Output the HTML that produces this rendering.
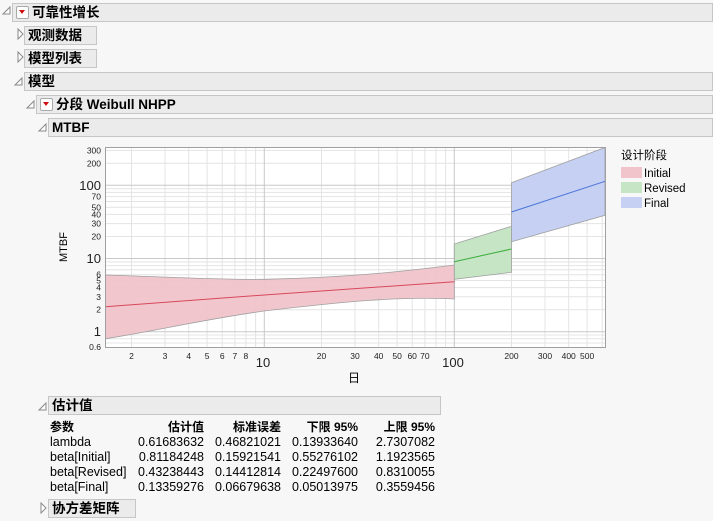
<!DOCTYPE html>
<html><head><meta charset="utf-8"><style>
body{margin:0;width:713px;height:521px;background:#f7f7f7;font-family:"Liberation Sans","Noto Sans CJK SC",sans-serif;position:relative;overflow:hidden;color:#000}
.h{position:absolute;background:#ebebeb;border:1px solid #c6c6c6;box-sizing:border-box;height:19px;font-weight:bold;font-size:13.5px;line-height:17px;padding-left:3px;white-space:nowrap}
.red{display:inline-block;width:11px;height:11px;border:1px solid #aaa;border-radius:2px;background:#fff;vertical-align:-2px;margin-right:3px;position:relative}
.red:after{content:"";position:absolute;left:2px;top:3px;border-left:3.5px solid transparent;border-right:3.5px solid transparent;border-top:4px solid #d01010}
table{position:absolute;left:50px;top:420px;border-collapse:collapse;font-size:12.5px;table-layout:fixed;width:385px}
td{padding:0;height:15px;line-height:15px;text-align:right;white-space:nowrap}
td:first-child{text-align:left}
th{text-align:right;font-weight:bold;height:15px;line-height:15px;font-size:12px;padding:0;white-space:nowrap}
th:first-child{text-align:left}
</style></head><body>
<svg style="position:absolute;left:0;top:0" width="713" height="521">
<g fill="none" stroke="#8a8a8a" stroke-width="1">
<path d="M3 14 L10 7 L10 14 Z" fill="#fff"/>
<path d="M18 29 L23 34 L18 39 Z" fill="#fff"/>
<path d="M18 52 L23 57 L18 62 Z" fill="#fff"/>
<path d="M15 85 L22 78 L22 85 Z" fill="#fff"/>
<path d="M27 108 L34 101 L34 108 Z" fill="#fff"/>
<path d="M39 131 L46 124 L46 131 Z" fill="#fff"/>
<path d="M39 410 L46 403 L46 410 Z" fill="#fff"/>
<path d="M41 503 L46 508 L41 513 Z" fill="#fff"/>
</g>
<rect x="105.5" y="147.5" width="500" height="200" fill="#fff"/>
<g stroke="#e4e4e4" stroke-width="1">
<path d="M131.5 147V347M165 147V347M188.7 147V347M207.1 147V347M222.2 147V347M234.9 147V347M245.9 147V347M255.6 147V347M321.5 147V347M355 147V347M378.7 147V347M397.1 147V347M412.2 147V347M424.9 147V347M435.9 147V347M445.6 147V347M511.5 147V347M545 147V347M568.7 147V347M587.1 147V347M602.2 147V347"/>
<path d="M105 343H605M105 338.8H605M105 335H605M105 309.7H605M105 296.8H605M105 287.6H605M105 280.5H605M105 274.7H605M105 269.8H605M105 265.6H605M105 261.9H605M105 236.5H605M105 223.6H605M105 214.4H605M105 207.3H605M105 201.5H605M105 196.6H605M105 192.4H605M105 188.7H605M105 163.3H605M105 150.4H605"/>
</g>
<g stroke="#c8c8c8"><path d="M264.3 147V347M454.3 147V347M105 331.7H605M105 258.5H605M105 185.3H605"/></g>
<path d="M105.5 275 C170 277 220 280 264 279.3 C340 278 400 272 454.3 265 L454.3 299 C400 296 340 302 264 311 C200 320 150 332 105.5 338.7 Z" fill="#f0c4ca" fill-opacity="0.95" stroke="#a0a0a0" stroke-width="0.8"/>
<path d="M105.5 306.7 L264.3 295 L454.3 281.7" fill="none" stroke="#d9475a" stroke-width="1"/>
<path d="M454.3 244 L511.5 226.3 L511.5 272.3 L454.3 279.3 Z" fill="#c5e5c5" stroke="#a0a0a0" stroke-width="0.8"/>
<path d="M454.3 261.7 L511.5 249" stroke="#3cad3c" stroke-width="1"/>
<path d="M511.5 182.7 L605 147.5 L605 215.3 L511.5 241.7 Z" fill="#c5d0f2" stroke="#a0a0a0" stroke-width="0.8"/>
<path d="M511.5 212 L605 181.3" stroke="#4a74d8" stroke-width="1"/>
<rect x="105.5" y="147.5" width="500" height="200" fill="none" stroke="#a0a0a0"/>
<g font-size="8.5" text-anchor="middle" fill="#222">
<text x="131.5" y="359">2</text><text x="165" y="359">3</text><text x="188.7" y="359">4</text><text x="207.1" y="359">5</text><text x="222.2" y="359">6</text><text x="234.9" y="359">7</text><text x="245.9" y="359">8</text>
<text x="321.5" y="359">20</text><text x="355" y="359">30</text><text x="378.7" y="359">40</text><text x="397.1" y="359">50</text><text x="412.2" y="359">60</text><text x="424.9" y="359">70</text>
<text x="511.5" y="359">200</text><text x="545" y="359">300</text><text x="568.7" y="359">400</text><text x="587.1" y="359">500</text>
</g>
<g font-size="13" text-anchor="middle" fill="#222"><text x="263" y="367">10</text><text x="453" y="367">100</text></g>
<g font-size="8.5" text-anchor="end" fill="#222">
<text x="101" y="350">0.6</text><text x="101" y="312.7">2</text><text x="101" y="299.8">3</text><text x="101" y="290.6">4</text><text x="101" y="283.5">5</text><text x="101" y="277.7">6</text>
<text x="101" y="239.5">20</text><text x="101" y="226.6">30</text><text x="101" y="217.4">40</text><text x="101" y="210.3">50</text><text x="101" y="199.6">70</text>
<text x="101" y="166.3">200</text><text x="101" y="153.4">300</text>
</g>
<g font-size="13" text-anchor="end" fill="#222"><text x="101" y="336">1</text><text x="101" y="263">10</text><text x="101" y="190">100</text></g>
<text x="67" y="247" font-size="11" text-anchor="middle" transform="rotate(-90 67 247)">MTBF</text>
<text x="354" y="382" font-size="12" text-anchor="middle">日</text>
<text x="621" y="159" font-size="11.5">设计阶段</text>
<rect x="621" y="167" width="21" height="11" fill="#f0c4ca"/><text x="644" y="177" font-size="11.5">Initial</text>
<rect x="621" y="182" width="21" height="11" fill="#c5e5c5"/><text x="644" y="192" font-size="11.5">Revised</text>
<rect x="621" y="197" width="21" height="11" fill="#c5d0f2"/><text x="644" y="207" font-size="11.5">Final</text>
</svg>
<div class="h" style="left:12px;top:3px;width:701px"><span class="red"></span>可靠性增长</div>
<div class="h" style="left:24px;top:26px;width:73px">观测数据</div>
<div class="h" style="left:24px;top:49px;width:73px">模型列表</div>
<div class="h" style="left:24px;top:72px;width:689px">模型</div>
<div class="h" style="left:36px;top:95px;width:677px"><span class="red"></span>分段 Weibull NHPP</div>
<div class="h" style="left:48px;top:118px;width:665px">MTBF</div>
<div class="h" style="left:48px;top:396px;width:393px">估计值</div>
<table>
<colgroup><col style="width:80px"><col style="width:74px"><col style="width:77px"><col style="width:77px"><col style="width:77px"></colgroup>
<tr><th>参数</th><th>估计值</th><th>标准误差</th><th>下限 95%</th><th>上限 95%</th></tr>
<tr><td>lambda</td><td>0.61683632</td><td>0.46821021</td><td>0.13933640</td><td>2.7307082</td></tr>
<tr><td>beta[Initial]</td><td>0.81184248</td><td>0.15921541</td><td>0.55276102</td><td>1.1923565</td></tr>
<tr><td>beta[Revised]</td><td>0.43238443</td><td>0.14412814</td><td>0.22497600</td><td>0.8310055</td></tr>
<tr><td>beta[Final]</td><td>0.13359276</td><td>0.06679638</td><td>0.05013975</td><td>0.3559456</td></tr>
</table>
<div class="h" style="left:48px;top:499px;width:88px">协方差矩阵</div>
</body></html>
